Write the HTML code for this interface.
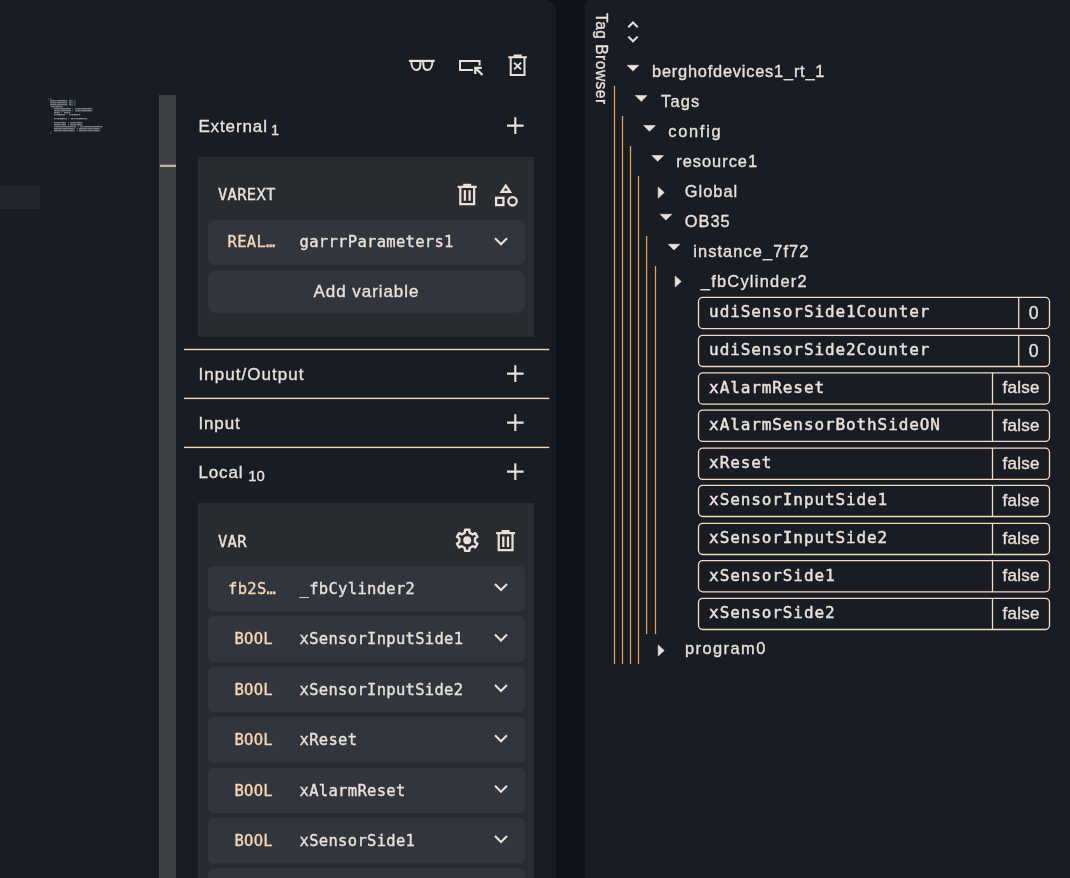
<!DOCTYPE html>
<html lang="en"><head><meta charset="utf-8"><title>Tag Browser</title>
<style>
html,body{margin:0;padding:0;}
body{width:1070px;height:878px;overflow:hidden;position:relative;background:#0e121b;color:#ebe0d5;
 font-family:"Liberation Sans",sans-serif;}
.abs{position:absolute;}
.t{position:absolute;white-space:nowrap;line-height:20px;height:20px;}
.s{font-family:"Liberation Sans",sans-serif;-webkit-text-stroke:.35px currentColor;}
.m{font-family:"DejaVu Sans Mono","Liberation Mono",monospace;-webkit-text-stroke:.36px currentColor;}
.ty{color:#f6d5b4;}
svg{position:absolute;left:0;top:0;}
#tx{position:absolute;left:0;top:0;width:1070px;height:878px;will-change:transform;}
</style></head><body>
<svg width="1070" height="878" viewBox="0 0 1070 878" fill="none" stroke="none"><path d="M0 -0.4 H543.6 A12.4 12.4 0 0 1 556 12 V890 H0 Z" fill="#181d25"/>
<path d="M1080 -1 H593.3 A8.3 8.3 0 0 0 585 7.3 V890 H1080 Z" fill="#181d25"/>
<rect x="0" y="186" width="40" height="23" fill="#22262f"/>
<rect x="159" y="95" width="17" height="800" fill="#3d4045"/>
<rect x="160" y="164.7" width="16" height="2.3" fill="#c6b5a4"/>
<rect x="198" y="156.8" width="336" height="180.1" fill="#282b30"/>
<rect x="198" y="503" width="336" height="400" fill="#282b30"/>
<rect x="208" y="220" width="317" height="44.7" rx="5.5" fill="#31353d"/>
<rect x="208" y="270.3" width="317" height="42.5" rx="8.5" fill="#31353d"/>
<rect x="208" y="565.9" width="317" height="45.6" rx="5.5" fill="#31353d"/>
<rect x="208" y="616.3" width="317" height="45.6" rx="5.5" fill="#31353d"/>
<rect x="208" y="666.7" width="317" height="45.6" rx="5.5" fill="#31353d"/>
<rect x="208" y="717.1" width="317" height="45.6" rx="5.5" fill="#31353d"/>
<rect x="208" y="767.5" width="317" height="45.6" rx="5.5" fill="#31353d"/>
<rect x="208" y="817.9" width="317" height="45.6" rx="5.5" fill="#31353d"/>
<rect x="208" y="868.3" width="317" height="45.6" rx="5.5" fill="#31353d"/>
<rect x="183.9" y="348.8" width="365.4" height="1.4" fill="#f7d6b8"/>
<rect x="183.9" y="397.7" width="365.4" height="1.4" fill="#f7d6b8"/>
<rect x="183.9" y="446.7" width="365.4" height="1.4" fill="#f7d6b8"/>
<rect x="613.88" y="86" width="1.25" height="578" fill="#f0a050"/>
<rect x="621.88" y="116" width="1.25" height="548" fill="#f0a050"/>
<rect x="629.88" y="146" width="1.25" height="518" fill="#f0a050"/>
<rect x="637.88" y="176" width="1.25" height="488" fill="#f0a050"/>
<rect x="645.98" y="236" width="1.25" height="398" fill="#f0a050"/>
<rect x="654.88" y="266" width="1.25" height="368" fill="#f0a050"/>
<rect x="698.5" y="297.4" width="351" height="31.2" rx="4.2" stroke="#f7d9bb" stroke-width="1.3"/>
<rect x="1018.05" y="297.4" width="1.3" height="31.2" fill="#f7d9bb"/>
<rect x="698.5" y="335.3" width="351" height="31.2" rx="4.2" stroke="#f7d9bb" stroke-width="1.3"/>
<rect x="1018.05" y="335.3" width="1.3" height="31.2" fill="#f7d9bb"/>
<rect x="698.5" y="372.9" width="351" height="31.2" rx="4.2" stroke="#f7d9bb" stroke-width="1.3"/>
<rect x="991.85" y="372.9" width="1.3" height="31.2" fill="#f7d9bb"/>
<rect x="698.5" y="410.2" width="351" height="31.2" rx="4.2" stroke="#f7d9bb" stroke-width="1.3"/>
<rect x="991.85" y="410.2" width="1.3" height="31.2" fill="#f7d9bb"/>
<rect x="698.5" y="448.2" width="351" height="31.2" rx="4.2" stroke="#f7d9bb" stroke-width="1.3"/>
<rect x="991.85" y="448.2" width="1.3" height="31.2" fill="#f7d9bb"/>
<rect x="698.5" y="485.3" width="351" height="31.2" rx="4.2" stroke="#f7d9bb" stroke-width="1.3"/>
<rect x="991.85" y="485.3" width="1.3" height="31.2" fill="#f7d9bb"/>
<rect x="698.5" y="523.3" width="351" height="31.2" rx="4.2" stroke="#f7d9bb" stroke-width="1.3"/>
<rect x="991.85" y="523.3" width="1.3" height="31.2" fill="#f7d9bb"/>
<rect x="698.5" y="560.6" width="351" height="31.2" rx="4.2" stroke="#f7d9bb" stroke-width="1.3"/>
<rect x="991.85" y="560.6" width="1.3" height="31.2" fill="#f7d9bb"/>
<rect x="698.5" y="598.3" width="351" height="31.2" rx="4.2" stroke="#f7d9bb" stroke-width="1.3"/>
<rect x="991.85" y="598.3" width="1.3" height="31.2" fill="#f7d9bb"/>
<path d="M627.2 65.3 h11.6 l-5.8 5.8 z" fill="#ebe0d5" stroke="#ebe0d5" stroke-width=".6" stroke-linejoin="round"/>
<path d="M635.4 95.6 h11.6 l-5.8 5.8 z" fill="#ebe0d5" stroke="#ebe0d5" stroke-width=".6" stroke-linejoin="round"/>
<path d="M643.7 125.5 h11.6 l-5.8 5.8 z" fill="#ebe0d5" stroke="#ebe0d5" stroke-width=".6" stroke-linejoin="round"/>
<path d="M651.9 155.5 h11.6 l-5.8 5.8 z" fill="#ebe0d5" stroke="#ebe0d5" stroke-width=".6" stroke-linejoin="round"/>
<path d="M658.2 187.1 v11 l6 -5.5 z" fill="#ebe0d5" stroke="#ebe0d5" stroke-width=".6" stroke-linejoin="round"/>
<path d="M660.1 214.3 h11.6 l-5.8 5.8 z" fill="#ebe0d5" stroke="#ebe0d5" stroke-width=".6" stroke-linejoin="round"/>
<path d="M668.2 244.3 h11.6 l-5.8 5.8 z" fill="#ebe0d5" stroke="#ebe0d5" stroke-width=".6" stroke-linejoin="round"/>
<path d="M675.2 276 v11 l6 -5.5 z" fill="#ebe0d5" stroke="#ebe0d5" stroke-width=".6" stroke-linejoin="round"/>
<path d="M658.2 645 v11 l6 -5.5 z" fill="#ebe0d5" stroke="#ebe0d5" stroke-width=".6" stroke-linejoin="round"/>
<path d="M628.3 27.2 l4.7 -4.7 l4.7 4.7 M628.3 36.6 l4.7 4.7 l4.7 -4.7" stroke="#ebe0d5" stroke-width="2"/>
<path d="M507 125.6 h16.6 M515.3 117.3 v16.6" stroke="#ebe0d5" stroke-width="2.1"/>
<path d="M507 373.6 h16.6 M515.3 365.3 v16.6" stroke="#ebe0d5" stroke-width="2.1"/>
<path d="M507 422.6 h16.6 M515.3 414.3 v16.6" stroke="#ebe0d5" stroke-width="2.1"/>
<path d="M507 471.6 h16.6 M515.3 463.3 v16.6" stroke="#ebe0d5" stroke-width="2.1"/>
<path d="M495 238.3 l6 6 l6 -6" stroke="#ebe0d5" stroke-width="2.1"/>
<path d="M495 584.1 l6 6 l6 -6" stroke="#ebe0d5" stroke-width="2.1"/>
<path d="M495 634.5 l6 6 l6 -6" stroke="#ebe0d5" stroke-width="2.1"/>
<path d="M495 684.9 l6 6 l6 -6" stroke="#ebe0d5" stroke-width="2.1"/>
<path d="M495 735.3 l6 6 l6 -6" stroke="#ebe0d5" stroke-width="2.1"/>
<path d="M495 785.7 l6 6 l6 -6" stroke="#ebe0d5" stroke-width="2.1"/>
<path d="M495 836.1 l6 6 l6 -6" stroke="#ebe0d5" stroke-width="2.1"/>
<path d="M495 886.5 l6 6 l6 -6" stroke="#ebe0d5" stroke-width="2.1"/>
<g transform="translate(457.7 183.8)" stroke="#ebe0d5" stroke-width="2.25" fill="none">
<path d="M0 3h19 M5.5 1h8"/><path d="M2.6 3.5v16.7h13.8v-16.7"/><path d="M7.2 6.5v10.5 M11.9 6.5v10.5"/></g>
<g transform="translate(496.1 530)" stroke="#ebe0d5" stroke-width="2.25" fill="none">
<path d="M0 3h19 M5.5 1h8"/><path d="M2.6 3.5v16.7h13.8v-16.7"/><path d="M7.2 6.5v10.5 M11.9 6.5v10.5"/></g>
<g stroke="#ebe0d5" stroke-width="2.3" fill="none"><path d="M505.8 185.6 l4.2 6.2 h-8.4 z" stroke-linejoin="miter"/><rect x="496.1" y="197.8" width="7.3" height="7.3"/><circle cx="512.5" cy="201.3" r="4.2"/></g>
<path d="M464.84 532.66 L465.05 529.72 L469.35 529.72 L469.56 532.66 L472.64 534.43 L475.29 533.15 L477.44 536.87 L475.00 538.53 L475.00 542.07 L477.44 543.73 L475.29 547.45 L472.64 546.17 L469.56 547.94 L469.35 550.88 L465.05 550.88 L464.84 547.94 L461.76 546.17 L459.11 547.45 L456.96 543.73 L459.40 542.07 L459.40 538.53 L456.96 536.87 L459.11 533.15 L461.76 534.43 Z" stroke="#ebe0d5" stroke-width="2.4" stroke-linejoin="round"/>
<circle cx="467.2" cy="540.3" r="4" fill="#ebe0d5"/>
<g stroke="#ebe0d5" stroke-width="2" fill="none"><path d="M408.9 60.9h25.8" stroke-width="2.2"/><path d="M411.2 61C411.6 68 413 70 416.2 70C419.4 70 420.5 68.5 420.5 61"/><path d="M432.5 61C432.1 68 430.7 70 427.5 70C424.3 70 423.2 68.5 423.2 61"/></g>
<g stroke="#ebe0d5" stroke-width="2" fill="none"><path d="M473 70h-13v-9h19.6v4.5"/><path d="M475.3 67.8l7.2 7.2 M475.3 74v-6.2h6.4" stroke-width="2.3"/></g>
<g stroke="#ebe0d5" stroke-width="2" fill="none"><path d="M508.3 57.3h18.6 M513.5 55.6h8.2"/><path d="M510.7 58v17h13.8v-17"/><path d="M514.2 62.6l6.8 6.8 M521 62.6l-6.8 6.8"/></g>
</svg>

<pre class="abs" style="left:48px;top:96.6px;margin:0;font:bold 10px/9.5238px 'DejaVu Sans Mono','Liberation Mono',monospace;color:#c9c9c9;transform-origin:0 0;text-shadow:0 4.762px 0 rgba(201,201,201,.4);transform:scale(.1661,.21);will-change:transform"><span style="color:#6a9955">(**)</span>
  xSensorInputSide1<span style="color:#6a9955">:=</span>%I<span style="color:#6a9955">X0</span>.<span style="color:#6a9955">0;</span>
  xSensorInputSide2<span style="color:#6a9955">:=</span>%I<span style="color:#6a9955">X0</span>.<span style="color:#6a9955">1;</span>
  xSensorInputReset<span style="color:#6a9955">:=</span>%I<span style="color:#6a9955">X0</span>.<span style="color:#6a9955">2;</span>
  _fbCylinder2(
      xSensorInputSide1 := xSensorInputSide1,
      xSensorInputSide2 := xSensorInputSide2,
      xReset := xReset,
      xAlarmReset := xAlarmReset,

      arrParameters := garrrParameters1,

      xSensorSide1 =&gt; xSensorSide1,
      xSensorSide2 =&gt; xSensorSide2,
      xAlarmSensorBothSideON =&gt; xAlarmSensorBothSideON,
      udiSensorSide1Counter =&gt; udiSensorSide1Counter,
      udiSensorSide2Counter =&gt; udiSensorSide2Counter
  );</pre>
<div id="tx">
<div class="t s" style="left:198.4px;top:116.5px;font-size:17px;letter-spacing:0.88px;">External</div>
<div class="t s" style="left:271px;top:119.8px;font-size:14.6px;">1</div>
<div class="t s" style="left:198.4px;top:364.5px;font-size:17px;letter-spacing:1.04px;">Input/Output</div>
<div class="t s" style="left:198.4px;top:413.5px;font-size:17px;letter-spacing:0.88px;">Input</div>
<div class="t s" style="left:198.4px;top:462.5px;font-size:17px;letter-spacing:0.88px;">Local</div>
<div class="t s" style="left:248.2px;top:465.8px;font-size:14.8px;">10</div>
<div class="t m" style="left:217.9px;top:185.2px;font-size:15.5px;letter-spacing:0.3px;">VAREXT</div>
<div class="t m" style="left:217.9px;top:532px;font-size:15.5px;letter-spacing:0.3px;">VAR</div>
<div class="t m ty" style="left:227.6px;top:232px;font-size:15.5px;letter-spacing:0.3px;">REAL…</div>
<div class="t m" style="left:299.6px;top:232px;font-size:15.5px;letter-spacing:0.3px;">garrrParameters1</div>
<div class="t s" style="left:313.5px;top:282px;font-size:17px;letter-spacing:0.95px;">Add variable</div>
<div class="t m ty" style="left:228px;top:579.2px;font-size:15.5px;letter-spacing:0.3px;">fb2S…</div>
<div class="t m" style="left:299.6px;top:579.2px;font-size:15.5px;letter-spacing:0.3px;">_fbCylinder2</div>
<div class="t m ty" style="left:234.4px;top:629.2px;font-size:15.5px;letter-spacing:0.3px;">BOOL</div>
<div class="t m" style="left:299.6px;top:629.2px;font-size:15.5px;letter-spacing:0.3px;">xSensorInputSide1</div>
<div class="t m ty" style="left:234.4px;top:680.2px;font-size:15.5px;letter-spacing:0.3px;">BOOL</div>
<div class="t m" style="left:299.6px;top:680.2px;font-size:15.5px;letter-spacing:0.3px;">xSensorInputSide2</div>
<div class="t m ty" style="left:234.4px;top:730.2px;font-size:15.5px;letter-spacing:0.3px;">BOOL</div>
<div class="t m" style="left:299.6px;top:730.2px;font-size:15.5px;letter-spacing:0.3px;">xReset</div>
<div class="t m ty" style="left:234.4px;top:781.2px;font-size:15.5px;letter-spacing:0.3px;">BOOL</div>
<div class="t m" style="left:299.6px;top:781.2px;font-size:15.5px;letter-spacing:0.3px;">xAlarmReset</div>
<div class="t m ty" style="left:234.4px;top:831.2px;font-size:15.5px;letter-spacing:0.3px;">BOOL</div>
<div class="t m" style="left:299.6px;top:831.2px;font-size:15.5px;letter-spacing:0.3px;">xSensorSide1</div>
<div class="t m ty" style="left:234.4px;top:881.2px;font-size:15.5px;letter-spacing:0.3px;">BOOL</div>
<div class="t m" style="left:299.6px;top:881.2px;font-size:15.5px;letter-spacing:0.3px;">xSensorSide2</div>
<div class="t s" style="left:652px;top:60.5px;font-size:16.4px;letter-spacing:0.78px;">berghofdevices1_rt_1</div>
<div class="t s" style="left:661px;top:90.5px;font-size:16.4px;letter-spacing:1.2px;">Tags</div>
<div class="t s" style="left:668.2px;top:120.5px;font-size:16.4px;letter-spacing:1.75px;">config</div>
<div class="t s" style="left:676.2px;top:150.5px;font-size:16.4px;letter-spacing:1px;">resource1</div>
<div class="t s" style="left:684.8px;top:180.5px;font-size:16.4px;letter-spacing:1px;">Global</div>
<div class="t s" style="left:684.8px;top:210.5px;font-size:16.4px;letter-spacing:0.95px;">OB35</div>
<div class="t s" style="left:693.2px;top:240.5px;font-size:16.4px;letter-spacing:1.1px;">instance_7f72</div>
<div class="t s" style="left:700.8px;top:270.5px;font-size:16.4px;letter-spacing:1.25px;">_fbCylinder2</div>
<div class="t s" style="left:685px;top:637.5px;font-size:16.4px;letter-spacing:1.45px;">program0</div>
<div class="s" style="position:absolute;left:591px;top:13px;width:20px;line-height:20px;white-space:nowrap;writing-mode:vertical-rl;font-size:15.6px;letter-spacing:.45px;">Tag Browser</div>
<div class="t m" style="left:709.1px;top:302px;font-size:16px;letter-spacing:0.9px;-webkit-text-stroke-width:.45px;">udiSensorSide1Counter</div>
<div class="t s" style="left:1028.8px;top:302.7px;font-size:17.6px;">0</div>
<div class="t m" style="left:709.1px;top:340px;font-size:16px;letter-spacing:0.9px;-webkit-text-stroke-width:.45px;">udiSensorSide2Counter</div>
<div class="t s" style="left:1028.8px;top:340.6px;font-size:17.6px;">0</div>
<div class="t m" style="left:709.1px;top:378px;font-size:16px;letter-spacing:0.9px;-webkit-text-stroke-width:.45px;">xAlarmReset</div>
<div class="t s" style="left:1002.6px;top:378.2px;font-size:17px;letter-spacing:0.25px;">false</div>
<div class="t m" style="left:709.1px;top:415px;font-size:16px;letter-spacing:0.9px;-webkit-text-stroke-width:.45px;">xAlarmSensorBothSideON</div>
<div class="t s" style="left:1002.6px;top:415.5px;font-size:17px;letter-spacing:0.25px;">false</div>
<div class="t m" style="left:709.1px;top:453px;font-size:16px;letter-spacing:0.9px;-webkit-text-stroke-width:.45px;">xReset</div>
<div class="t s" style="left:1002.6px;top:453.5px;font-size:17px;letter-spacing:0.25px;">false</div>
<div class="t m" style="left:709.1px;top:490px;font-size:16px;letter-spacing:0.9px;-webkit-text-stroke-width:.45px;">xSensorInputSide1</div>
<div class="t s" style="left:1002.6px;top:490.6px;font-size:17px;letter-spacing:0.25px;">false</div>
<div class="t m" style="left:709.1px;top:528px;font-size:16px;letter-spacing:0.9px;-webkit-text-stroke-width:.45px;">xSensorInputSide2</div>
<div class="t s" style="left:1002.6px;top:528.6px;font-size:17px;letter-spacing:0.25px;">false</div>
<div class="t m" style="left:709.1px;top:566px;font-size:16px;letter-spacing:0.9px;-webkit-text-stroke-width:.45px;">xSensorSide1</div>
<div class="t s" style="left:1002.6px;top:565.9px;font-size:17px;letter-spacing:0.25px;">false</div>
<div class="t m" style="left:709.1px;top:603px;font-size:16px;letter-spacing:0.9px;-webkit-text-stroke-width:.45px;">xSensorSide2</div>
<div class="t s" style="left:1002.6px;top:603.6px;font-size:17px;letter-spacing:0.25px;">false</div>
</div>

</body></html>
